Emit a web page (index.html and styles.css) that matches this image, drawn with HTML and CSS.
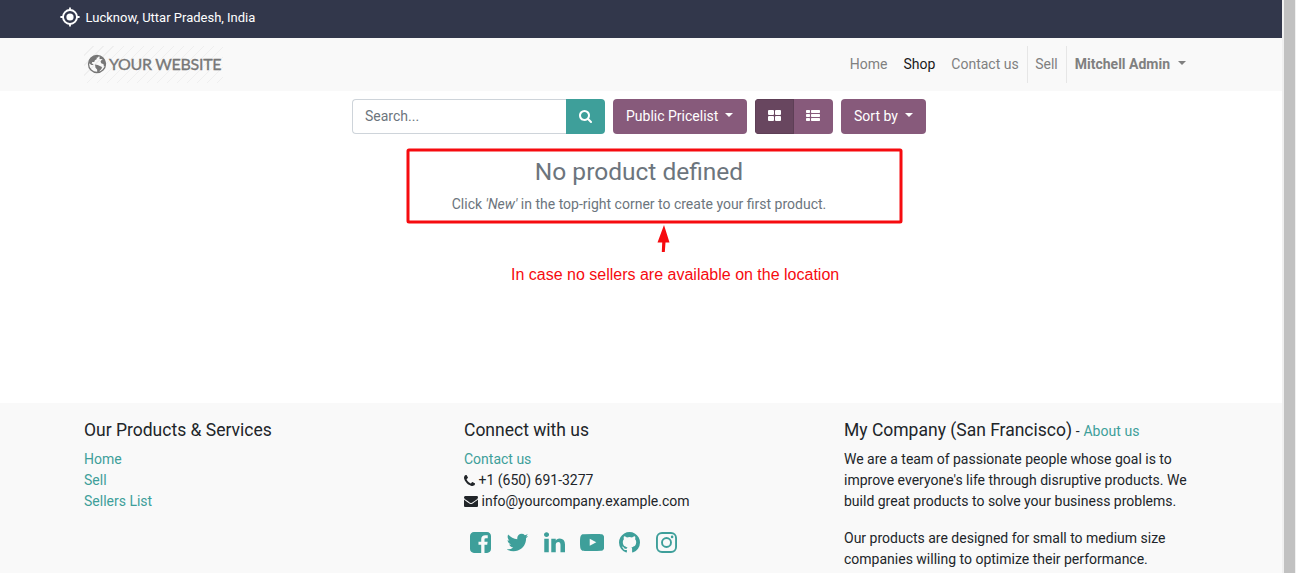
FILE: index.html
```html
<!DOCTYPE html>
<html lang="en">
<head>
<meta charset="utf-8">
<title>Shop</title>
<link rel="stylesheet" href="styles.css">
</head>
<body>
<div class="page">
  <div class="topbar">
    <svg class="pin" viewBox="0 0 20 20"><circle cx="10" cy="10" r="7" fill="none" stroke="#fff" stroke-width="1.9"/><circle cx="10" cy="10" r="3.6" fill="#fff"/><path d="M10 .4V4M10 16v3.6M.4 10H4M16 10h3.600" stroke="#fff" stroke-width="1.8"/></svg>
    <span>Lucknow, Uttar Pradesh, India</span>
  </div>
  <header class="navbar">
    <a class="logo">
      <svg class="globe" viewBox="0 0 20 20"><circle cx="10" cy="10" r="8.500" fill="none" stroke="#777" stroke-width="1.300"/><path fill="#777" d="M2 7.500C3 4 6.500 1.500 10 1.400l1.600.8-.6 1.300-1.500.2.400 1.300-2 1.300-.7 1.800-2-.2-.5 1.500 1.400.5.300 1.200L4.500 11 2 9.300zM8 10.600l2.800.3 2.600 1.400 1.600.8-.6 2-1.500 1.300-1 2-1.600.2-.2-3-1.600-1.800zM13 2.200c3 1.100 5 3.600 5.600 6.300l-.3 3.700-1.400-.1-.5-2-1.900-.5-1-1.900 1-1.700 1.400-.5-1.600-.6-1.800.2.100-1.500z"/></svg>
      <span>YOUR WEBSITE</span>
    </a>
    <nav class="menu">
      <a>Home</a><a class="active">Shop</a><a>Contact us</a><a class="sell">Sell</a><a class="user">Mitchell Admin<i class="caret"></i></a>
    </nav>
  </header>
  <main class="shop">
    <div class="toolbar">
      <div class="search">
        <div class="field">Search...</div>
        <div class="go"><svg viewBox="64 128 1664 1664"><path d="M1216 832q0-185-131.500-316.500t-316.500-131.500-316.500 131.500-131.500 316.500 131.500 316.500 316.500 131.500 316.500-131.500 131.500-316.500zm512 832q0 52-38 90t-90 38q-54 0-90-38l-343-342q-179 124-399 124-143 0-273.500-55.500t-225-150-150-225-55.500-273.500 55.500-273.500 150-225 225-150 273.500-55.500 273.500 55.500 225 150 150 225 55.500 273.500q0 220-124 399l343 343q37 37 37 90z"/></svg></div>
      </div>
      <div class="btn pricelist">Public Pricelist<i class="caret"></i></div>
      <div class="views">
        <div class="view on"><svg width="13" height="11" viewBox="0 0 13 11"><rect width="6" height="5" rx="1"/><rect x="7" width="6" height="5" rx="1"/><rect y="6" width="6" height="5" rx="1"/><rect x="7" y="6" width="6" height="5" rx="1"/></svg></div>
        <div class="view list"><svg width="14" height="11" viewBox="0 0 14 11"><rect width="4" height="3" rx=".7"/><rect x="5" width="9" height="3" rx=".7"/><rect y="4" width="4" height="3" rx=".7"/><rect x="5" y="4" width="9" height="3" rx=".7"/><rect y="8" width="4" height="3" rx=".7"/><rect x="5" y="8" width="9" height="3" rx=".7"/></svg></div>
      </div>
      <div class="btn sort">Sort by<i class="caret"></i></div>
    </div>
    <div class="empty">
      <h3>No product defined</h3>
      <p>Click <i>'New'</i> in the top-right corner to create your first product.</p>
    </div>
    <div class="callout">
      <svg width="498" height="106" viewBox="0 0 498 106"><rect x="3" y="3" width="493" height="72" rx="1" fill="none" stroke="#f60b0f" stroke-width="3"/><path d="M259 78l5.500 17.500h-4l-.7 9.500h-3l.4-9.500H252.500z" fill="#f60b0f"/></svg>
      <div class="note">In case no sellers are available on the location</div>
    </div>
  </main>
  <footer class="footer">
    <section>
      <h5>Our Products &amp; Services</h5>
      <a>Home</a><a>Sell</a><a>Sellers List</a>
    </section>
    <section>
      <h5>Connect with us</h5>
      <a>Contact us</a>
      <div class="contact"><svg width="11" height="11" viewBox="192 128 1408 1408"><path d="M1600 1240q0 27-10 70.500t-21 68.500q-21 50-122 106-94 51-186 51-27 0-53-3.500t-57.500-12.500-47-14.500-55.500-20.500-49-18q-98-35-175-83-127-79-264-216t-216-264q-48-77-83-175-3-9-18-49t-20.500-55.500-14.500-47-12.500-57.500-3.500-53q0-92 51-186 56-101 106-122 25-11 68.500-21t70.500-10q14 0 21 3 18 6 53 76 11 19 30 54t35 63.500 31 53.500q3 4 17.500 25t21.500 35.500 7 28.500q0 20-28.500 50t-62 55-62 53-28.500 46q0 9 5 22.500t8.500 20.500 14 24 11.500 19q76 137 174 235t235 174q2 1 19 11.500t24 14 20.500 8.500 22.500 5q18 0 46-28.500t53-62 55-62 50-28.500q14 0 28.500 7t35.500 21.500 25 17.500q25 15 53.500 31t63.500 35 54 30q70 35 76 53 3 7 3 21z"/></svg><span>+1 (650) 691-3277</span></div>
      <div class="contact"><svg width="14" height="11" viewBox="0 256 1792 1408"><path d="M1792 710v794q0 66-47 113t-113 47h-1472q-66 0-113-47t-47-113v-794q44 49 101 87 362 246 497 345 57 42 92.500 65.500t94.500 48 110 24.500h2q51 0 110-24.500t94.500-48 92.500-65.500q170-123 498-345 57-39 100-87zm0-294q0 79-49 151t-122 123q-376 261-468 325-10 7-42.500 31t-54 38.500-52 32.500-57.500 27-50 9h-2q-23 0-50-9t-57.500-27-52-32.500-54-38.500-42.500-31q-91-64-262-182.500t-205-142.500q-62-42-117-115.500t-55-136.500q0-78 41.500-130t118.500-52h1472q65 0 112.500 47t47.500 113z"/></svg><span>info@yourcompany.example.com</span></div>
      <div class="social">
        <svg class="sq" viewBox="128 128 1536 1536"><path d="M1376 128q119 0 203.500 84.500t84.500 203.500v960q0 119-84.500 203.500t-203.500 84.500h-188v-595h199l30-232h-229v-148q0-56 23.500-84t91.500-28l122-1v-207q-63-9-178-9-136 0-217.500 80t-81.500 226v171h-200v232h200v595h-532q-119 0-203.500-84.500t-84.500-203.500v-960q0-119 84.500-203.500t203.500-84.500h960z"/></svg>
        <svg class="sq" viewBox="128 128 1536 1536"><path d="M1684 408q-67 98-162 167 1 14 1 42 0 130-38 259.500t-115.500 248.500-184.500 210.500-258 146-323 54.500q-271 0-496-145 35 4 78 4 225 0 401-138-105-2-188-64.500t-114-159.500q33 5 61 5 43 0 85-11-112-23-185.500-111.500t-73.500-205.500v-4q68 38 146 41-66-44-105-115t-39-154q0-88 44-163 121 149 294.500 238.500t371.500 99.500q-8-38-8-74 0-134 94.500-228.500t228.500-94.500q140 0 236 102 109-21 205-78-37 115-142 178 93-10 186-50z"/></svg>
        <svg class="sq" viewBox="128 128 1536 1536"><path d="M477 625v991h-330v-991h330zm21-306q1 73-50.500 122t-135.500 49h-2q-82 0-132-49t-50-122q0-74 51.500-122.500t134.500-48.500 133 48.500 51 122.500zm1166 729v568h-329v-530q0-105-40.500-164.500t-126.500-59.500q-63 0-105.500 34.500t-63.500 85.500q-11 30-11 81v553h-329q2-399 2-647t-1-296l-1-48h329v144h-2q20-32 41-56t56.500-52 87-43.500 114.500-15.500q171 0 275 113.500t104 332.500z"/></svg>
        <svg class="wide" viewBox="0 128 1792 1536"><path d="M711 1128l484-250-484-253v503zm185-862q168 0 324.500 4.500t229.500 9.500l73 4q1 0 17 1.500t23 3 23.500 4.500 28.500 8 28 13 31 19.500 29 26.500q6 6 15.500 18.500t29 58.500 26.500 101q8 64 12.500 136.500t5.500 113.500v176q1 145-18 290-7 55-25 99.500t-32 61.500l-14 17q-14 15-29 26.500t-31 19-28 12.500-28.500 8-24 4.500-23 3-16.500 1.500q-251 19-627 19-207-2-359.500-6.500t-200.500-7.500l-49-4-36-4q-36-5-54.500-10t-51-21-56.500-41q-6-6-15.500-18.500t-29-58.500-26.500-101q-8-64-12.500-136.500t-5.500-113.500v-176q-1-145 18-290 7-55 25-99.500t32-61.500l14-17q14-15 29-26.500t31-19.500 28-13 28.500-8 23.500-4.500 23-3 17-1.500q251-18 627-18z"/></svg>
        <svg class="sq" viewBox="128 128 1536 1536"><path d="M896 128q209 0 385.500 103t279.500 279.500 103 385.500q0 251-146.500 451.500t-378.500 277.500q-27 5-40-7t-13-30q0-3 .5-76.500t.5-134.500q0-97-52-142 57-6 102.500-18t94-39 81-66.500 53-105 20.500-150.500q0-119-79-206 37-91-8-204-28-9-81 11t-92 44l-38 24q-93-26-192-26t-192 26q-16-11-42.500-27t-83.500-38.500-85-13.500q-45 113-8 204-79 87-79 206 0 85 20.500 150t52.500 105 80.500 67 94 39 102.500 18q-39 36-49 103-21 10-45 15t-57 5-65.500-21.500-55.500-62.500q-19-32-48.500-52t-49.500-24l-20-3q-21 0-29 4.500t-5 11.500 9 14 13 12l7 5q22 10 43.500 38t31.500 51l10 23q13 38 44 61.500t67 30 69.500 7 55.500-3.500l23-4q0 38 .5 88.500t.5 54.500q0 18-13 30t-40 7q-232-77-378.500-277.500t-146.500-451.500q0-209 103-385.500t279.500-279.500 385.500-103z"/></svg>
        <svg class="sq line" viewBox="0 0 21 21"><rect x=".95" y=".95" width="19.100" height="19.100" rx="5"/><circle cx="10.500" cy="10.500" r="4.500"/><circle class="dot" cx="16.100" cy="4.900" r="1.300"/></svg>
      </div>
    </section>
    <section>
      <h5>My Company (San Francisco)<small> - <a>About us</a></small></h5>
      <p>We are a team of passionate people whose goal is to improve everyone's life through disruptive products. We build great products to solve your business problems.</p>
      <p>Our products are designed for small to medium size companies willing to optimize their performance.</p>
    </section>
  </footer>
</div>
<div class="scrollbar"></div>
</body>
</html>
```
FILE: styles.css
```css
* { box-sizing: border-box; }
body { margin: 0; display: flex; height: 573px; overflow: hidden; background: #fff; color: #212529; font: 14px/21px Roboto, sans-serif; }
h3, h5, p { margin: 0; font-weight: 400; }
.page { width: 1282px; height: 573px; display: flex; flex-direction: column; overflow: hidden; }
.scrollbar { width: 14px; background: #c1c1c1; border-left: 2px solid #f0f0f0; border-right: 1px solid #f0f0f0; }

.topbar { height: 38px; flex: none; background: #32374b; color: #fff; display: flex; align-items: center; gap: 5.500px; padding: 0 0 4px 60px; font-size: 13px; }
.pin { width: 20px; height: 20px; }

.navbar { height: 53px; flex: none; background: #f9f9f9; display: flex; justify-content: space-between; align-items: center; padding: 0 88px 0 84px; }
.logo { width: 139px; height: 37px; display: flex; align-items: center; padding: 0 0 1px 3px; color: #777; font: 400 16px/20px Lato, sans-serif; letter-spacing: -.3px; -webkit-text-stroke: .35px #777; white-space: nowrap; background: repeating-linear-gradient(135deg, #f9f9f9 0 6.300px, #efefef 6.300px 7.100px); }
.globe { width: 20px; height: 20px; margin-right: 2px; flex: none; }
.menu { display: flex; height: 37px; line-height: 37px; color: #808080; }
.menu a { padding: 0 8px; }
.menu .active { color: #191919; }
.menu .sell { border-left: 1px solid #e6e6e6; border-right: 1px solid #e6e6e6; padding: 0 8px 0 7.500px; }
.menu .user { font-weight: 700; }
.caret { display: inline-block; margin-left: 7px; vertical-align: 4px; border: 4.200px solid transparent; border-top-color: currentColor; border-bottom: 0; }
.user .caret { margin-left: 8px; }

.shop { height: 312px; flex: none; position: relative; padding: 8px 0 0 352px; }
.toolbar { display: flex; gap: 8px; height: 35px; line-height: 35px; }
.search { display: flex; width: 253px; }
.field { flex: 1; border: 1px solid #ced4da; border-right: 0; border-radius: 4px 0 0 4px; padding-left: 12px; line-height: 33px; color: #6c757d; }
.go { width: 39px; background: #3e9f9a; border-radius: 0 4px 4px 0; display: flex; align-items: center; justify-content: center; }
.go svg { width: 13px; height: 13px; fill: #fff; }
.btn { background: #875a7b; color: #fff; border-radius: 4px; padding-left: 13px; }
.pricelist { width: 134px; }
.sort { width: 85px; }
.views { display: flex; width: 78px; border-radius: 4px; overflow: hidden; }
.view { width: 39px; background: #875a7b; display: flex; align-items: center; justify-content: center; padding-bottom: 2px; }
.view.on { background: #68465f; border: 1px solid #5e3f56; }
.view.list { padding-right: 2px; }
.view svg { fill: #fff; }
.empty { width: 574px; padding-top: 23px; text-align: center; color: #6c757d; }
.empty h3 { font-size: 24.500px; line-height: 29px; margin-bottom: 8px; }
.callout { position: absolute; left: 405px; top: 56px; width: 498px; }
.callout svg { display: block; }
.note { margin: 12px 0 0 106px; color: #f60b0f; font: 16px/20px "Liberation Sans", sans-serif; white-space: nowrap; }

.footer { flex: 1; background: #f9f9f9; display: flex; padding: 17px 0 0 84px; }
.footer section { width: 380px; flex: none; padding-right: 30px; }
.footer h5 { height: 21px; font-size: 17.500px; line-height: 21px; margin-bottom: 8px; white-space: nowrap; }
.footer h5 small { font-size: 14px; word-spacing: .3px; }
.footer a { color: #3e9f9a; }
.footer section > a { display: block; }
.footer p { margin-bottom: 16px; }
.contact { display: flex; align-items: center; gap: 3.500px; }
.contact svg { fill: #212529; }
.social { display: flex; align-items: center; padding: 20px 0 0 6px; gap: 15.800px; fill: #3e9f9a; }
.sq { width: 21px; height: 21px; }
.wide { width: 24.500px; height: 21px; margin: 0 -1.200px 0 -.6px; }
.line { fill: none; stroke: #3e9f9a; stroke-width: 1.900; }
.dot { fill: #3e9f9a; stroke: none; }
```
